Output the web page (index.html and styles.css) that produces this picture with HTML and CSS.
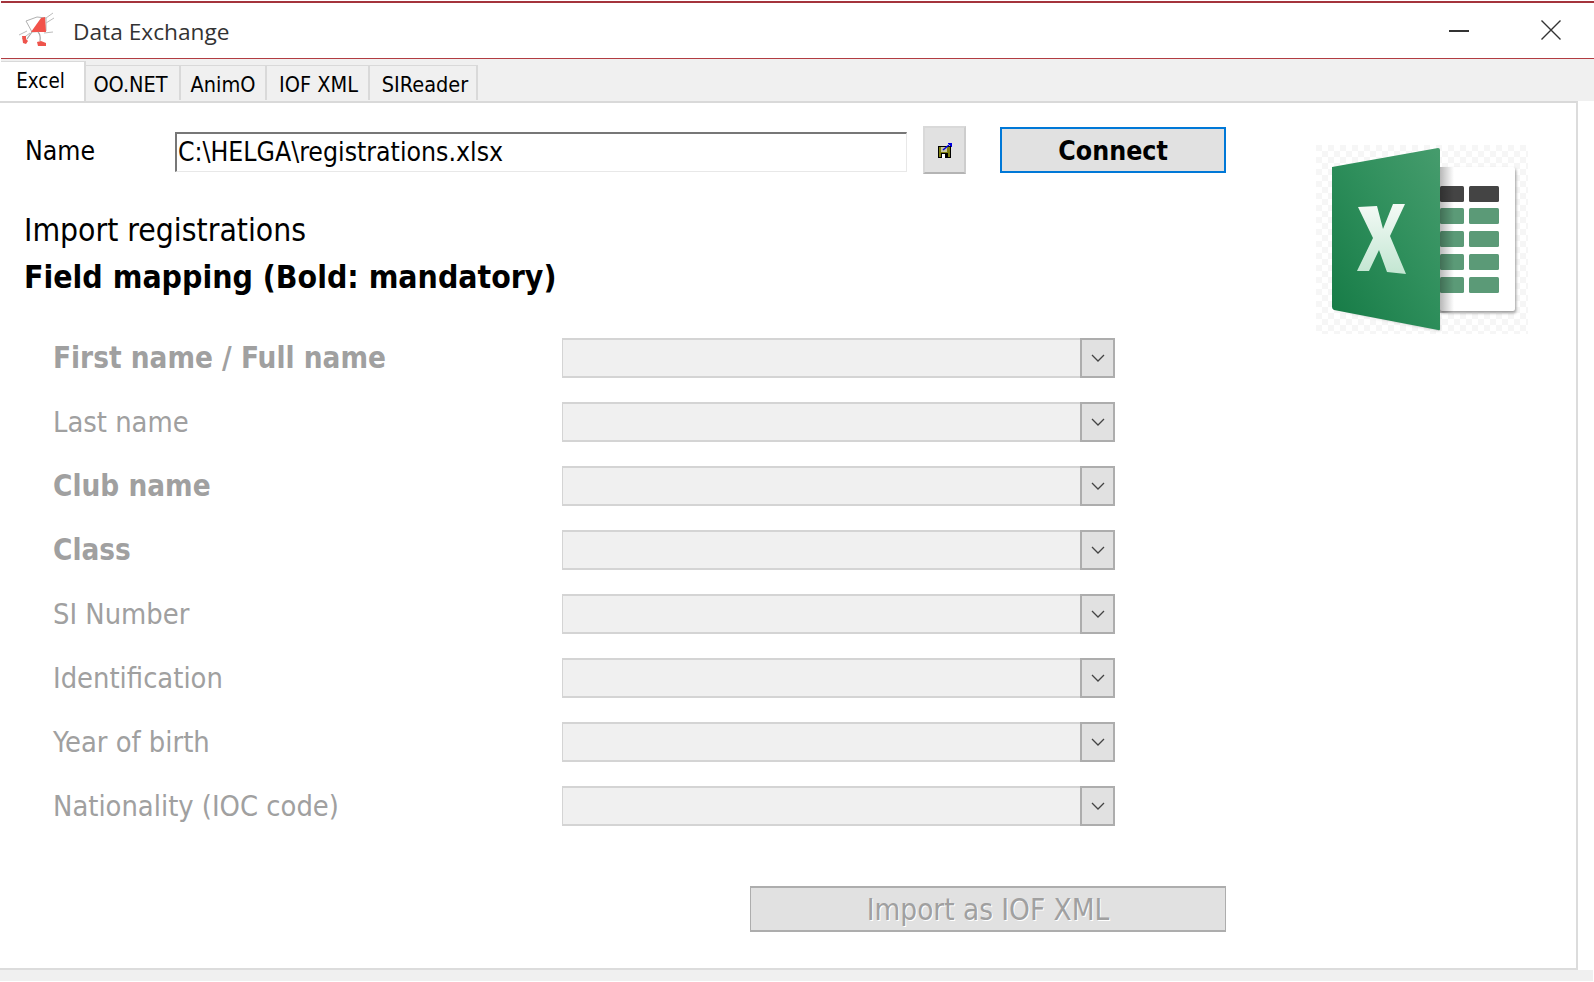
FILE: index.html
```html
<!DOCTYPE html>
<html lang="en">
<head>
<meta charset="utf-8">
<title>Data Exchange</title>
<link rel="stylesheet" href="styles.css">
</head>
<body>
<div class="window">
  <header class="titlebar">
    <svg class="app-logo" viewBox="0 0 50 50" width="50" height="50" aria-hidden="true">
      <path d="M16 13 L27 9 L36 10 L36 23 L22 24 Z" fill="#fff" stroke="#b0b0b0" stroke-width="1"/>
      <path d="M21 24 L31 10 L35 9 L36 24 Z" fill="#f2524a"/>
      <path d="M36 10 L43 5 M36 15 L44 10 M34 25 L43 24 M17 23 L9 27 M20 25 L12 31" stroke="#bcbcbc" stroke-width="1" fill="none"/>
      <path d="M28 24 Q31 27 30 33 M22 24 Q19 28 17 31" stroke="#a8a8a8" stroke-width="1.2" fill="none"/>
      <path d="M12 28 L16 28 L16 31 L18 33 L16 36 L13 35 Z" fill="#ee544c"/>
      <path d="M27 34 L31 33 L36 35 L36 38 L28 38 Z" fill="#ee544c"/>
    </svg>
    <span class="title-text">Data Exchange</span>
    <span class="win-btn win-min"><svg viewBox="0 0 20 2" width="20" height="2"><rect width="20" height="2" fill="#333"/></svg></span>
    <span class="win-btn win-close"><svg viewBox="0 0 20 20" width="20" height="20"><path d="M0.5 0.5 L19.5 19.5 M19.5 0.5 L0.5 19.5" stroke="#333" stroke-width="1.4" fill="none"/></svg></span>
  </header>

  <nav class="tabstrip">
    <span class="tab tab-active">Excel</span>
    <span class="tab tab-oo">OO.NET</span>
    <span class="tab tab-animo">AnimO</span>
    <span class="tab tab-iof">IOF XML</span>
    <span class="tab tab-si">SIReader</span>
  </nav>

  <main class="panel">
    <section class="form-col">
      <div class="file-row">
        <label class="file-label">Name</label>
        <div class="file-input">C:\HELGA\registrations.xlsx</div>
        <button class="browse-btn" type="button">
          <svg viewBox="0 0 14 15" width="14" height="15" shape-rendering="crispEdges" aria-hidden="true">
            <rect x="0" y="3" width="13" height="12" fill="#000"/>
            <rect x="1" y="4" width="11" height="10" fill="#7f7f10"/>
            <rect x="3" y="4" width="6" height="5" fill="#c8c8a0"/>
            <rect x="3" y="10" width="7" height="5" fill="#000"/>
            <rect x="4" y="11" width="3" height="4" fill="#fff"/>
            <path d="M5 7 L11 2" stroke="#0000e0" stroke-width="1.6" shape-rendering="auto"/>
            <path d="M9 0 L14 0 L14 5 Z" fill="#0000e0"/>
          </svg>
        </button>
        <button class="connect-btn" type="button">Connect</button>
      </div>

      <h1 class="h-import">Import registrations</h1>
      <h2 class="h-mapping">Field mapping (Bold: mandatory)</h2>

      <div class="rows">
        <div class="row"><span class="row-label strong">First name / Full name</span><div class="combo"><span class="combo-btn"><svg viewBox="0 0 14 8" width="14" height="8"><path d="M1 1 L7 7 L13 1" fill="none" stroke="#444" stroke-width="1.3"/></svg></span></div></div>
        <div class="row"><span class="row-label">Last name</span><div class="combo"><span class="combo-btn"><svg viewBox="0 0 14 8" width="14" height="8"><path d="M1 1 L7 7 L13 1" fill="none" stroke="#444" stroke-width="1.3"/></svg></span></div></div>
        <div class="row"><span class="row-label strong">Club name</span><div class="combo"><span class="combo-btn"><svg viewBox="0 0 14 8" width="14" height="8"><path d="M1 1 L7 7 L13 1" fill="none" stroke="#444" stroke-width="1.3"/></svg></span></div></div>
        <div class="row"><span class="row-label strong">Class</span><div class="combo"><span class="combo-btn"><svg viewBox="0 0 14 8" width="14" height="8"><path d="M1 1 L7 7 L13 1" fill="none" stroke="#444" stroke-width="1.3"/></svg></span></div></div>
        <div class="row"><span class="row-label">SI Number</span><div class="combo"><span class="combo-btn"><svg viewBox="0 0 14 8" width="14" height="8"><path d="M1 1 L7 7 L13 1" fill="none" stroke="#444" stroke-width="1.3"/></svg></span></div></div>
        <div class="row"><span class="row-label">Identification</span><div class="combo"><span class="combo-btn"><svg viewBox="0 0 14 8" width="14" height="8"><path d="M1 1 L7 7 L13 1" fill="none" stroke="#444" stroke-width="1.3"/></svg></span></div></div>
        <div class="row"><span class="row-label">Year of birth</span><div class="combo"><span class="combo-btn"><svg viewBox="0 0 14 8" width="14" height="8"><path d="M1 1 L7 7 L13 1" fill="none" stroke="#444" stroke-width="1.3"/></svg></span></div></div>
        <div class="row"><span class="row-label">Nationality (IOC code)</span><div class="combo"><span class="combo-btn"><svg viewBox="0 0 14 8" width="14" height="8"><path d="M1 1 L7 7 L13 1" fill="none" stroke="#444" stroke-width="1.3"/></svg></span></div></div>
      </div>

      <div class="import-wrap"><button class="import-btn" type="button" disabled>Import as IOF XML</button></div>
    </section>

    <aside class="icon-col">
      <svg viewBox="0 0 212 189" width="212" height="189" aria-label="Excel">
        <defs>
          <pattern id="chk" width="12" height="12" patternUnits="userSpaceOnUse">
            <rect width="12" height="12" fill="#fff"/>
            <rect width="6" height="6" fill="#f6f6f6"/>
            <rect x="6" y="6" width="6" height="6" fill="#f6f6f6"/>
          </pattern>
          <linearGradient id="cover" x1="0" y1="1" x2="1" y2="0">
            <stop offset="0" stop-color="#157a45"/>
            <stop offset="0.55" stop-color="#2f8f5c"/>
            <stop offset="1" stop-color="#469c6d"/>
          </linearGradient>
          <linearGradient id="xg" x1="0" y1="0" x2="0" y2="1">
            <stop offset="0" stop-color="#f4faf6"/>
            <stop offset="1" stop-color="#c3e6d2"/>
          </linearGradient>
          <linearGradient id="shade" x1="0" y1="0" x2="1" y2="0">
            <stop offset="0" stop-color="#000" stop-opacity="0.28"/>
            <stop offset="1" stop-color="#000" stop-opacity="0"/>
          </linearGradient>
          <filter id="soft" x="-10%" y="-10%" width="120%" height="120%"><feGaussianBlur stdDeviation="1.5"/></filter>
        </defs>
        <rect width="212" height="189" fill="url(#chk)"/>
        <rect x="124" y="24" width="76" height="144" rx="2" fill="#999" filter="url(#soft)"/>
        <rect x="124" y="22" width="75" height="144" rx="2" fill="#fff"/>
        <rect x="124" y="41" width="24" height="16" rx="1.5" fill="#444"/>
        <rect x="153" y="41" width="30" height="16" rx="1.5" fill="#444"/>
        <rect x="124" y="63" width="24" height="16" rx="1.5" fill="#5b9a77"/>
        <rect x="153" y="63" width="30" height="16" rx="1.5" fill="#5b9a77"/>
        <rect x="124" y="86" width="24" height="16" rx="1.5" fill="#5b9a77"/>
        <rect x="153" y="86" width="30" height="16" rx="1.5" fill="#5b9a77"/>
        <rect x="124" y="109" width="24" height="16" rx="1.5" fill="#5b9a77"/>
        <rect x="153" y="109" width="30" height="16" rx="1.5" fill="#5b9a77"/>
        <rect x="124" y="132" width="24" height="16" rx="1.5" fill="#5b9a77"/>
        <rect x="153" y="132" width="30" height="16" rx="1.5" fill="#5b9a77"/>
        <rect x="124" y="22" width="14" height="146" fill="url(#shade)"/>
        <path d="M20 165 L124 186 L124 172 Z" fill="#999" opacity="0.5" filter="url(#soft)"/>
        <path d="M16 22 L122 3 Q124 3 124 5 L124 184 Q124 186 122 185 L18 165 Q16 164 16 162 Z" fill="url(#cover)"/>
        <path d="M42 62 L61 61 L67 84 L77 59 L89 59 L74 91 L90 129 L71 127 L63 105 L53 126 L41 126 L57 93 Z" fill="url(#xg)"/>
      </svg>
    </aside>
  </main>
  <div class="bottom-strip"></div>
</div>
</body>
</html>
```
FILE: styles.css
```css
* { box-sizing: border-box; }
html, body { margin: 0; padding: 0; background: #fff; }
body { width: 1594px; height: 982px; overflow: hidden; font-family: "DejaVu Sans", "Liberation Sans", sans-serif; font-stretch: condensed; }
.window { display: flex; flex-direction: column; height: 982px; padding-left: 1px; }

.titlebar { height: 58px; display: flex; align-items: flex-start; border-top: 2px solid #a4343c; border-bottom: 1px solid #b23c42; background: #fff; margin-top: 1px; padding-left: 9px; }
.app-logo { flex: none; margin-top: 5px; }
.title-text { margin-left: 13px; margin-top: 14px; font-family: "Open Sans", "Noto Sans", sans-serif; font-stretch: normal; font-size: 22.7px; line-height: 30px; color: #333; flex: 1; }
.win-btn { display: flex; }
.win-min { margin-right: 72px; margin-top: 27px; }
.win-close { margin-right: 33px; margin-top: 17px; }

.tabstrip { height: 42px; display: flex; align-items: flex-end; background: #f0f0f0; font-size: 21.5px; color: #000; padding-bottom: 1px; }
.tab { height: 35px; padding-top: 2px; display: flex; align-items: center; justify-content: center; background: #f0f0f0; border: 1px solid #d9d9d9; border-bottom: 0; border-left: 0; border-right-width: 2px; }
.tab-active { height: 40px; width: 85px; padding-top: 0; padding-bottom: 2px; padding-right: 4px; font-size: 20.4px; background: #fff; position: relative; top: 1px; }
.tab-oo { width: 95px; padding-right: 4px; }
.tab-animo { width: 86px; }
.tab-iof { width: 103px; padding-left: 2px; }
.tab-si { width: 108px; padding-left: 4px; }

.panel { flex: none; height: 869px; width: 1578px; margin-left: -1px; background: #fff; border-top: 2px solid #d9d9d9; border-right: 2px solid #dcdcdc; border-bottom: 2px solid #dcdcdc; display: flex; }
.form-col { width: 1226px; flex: none; padding-top: 23px; }
.file-row { display: flex; align-items: flex-start; height: 50px; }
.file-label { width: 175px; padding-left: 25px; padding-top: 9px; font-size: 26.4px; color: #000; }
.file-input { width: 733px; height: 40px; margin-top: 6px; border: 1px solid #e8e8e8; border-top: 2px solid #777; border-left: 2px solid #777; font-size: 26.4px; line-height: 36px; color: #000; padding-left: 1px; background: #fff; white-space: nowrap; }
.browse-btn { width: 43px; height: 48px; margin-left: 16px; padding: 0; background: #e1e1e1; border: 2px solid #c4c4c4; border-color: #d9d9d9 #cdcdcd #b4b4b4 #d9d9d9; display: flex; align-items: center; justify-content: center; }
.connect-btn { width: 226px; height: 46px; margin-left: 34px; margin-top: 1px; padding: 0; background: #e1e1e1; border: 2px solid #0078d7; font: bold 26.5px "DejaVu Sans", sans-serif; font-stretch: condensed; color: #000; }
.h-import { margin: 34px 0 0 24px; font-size: 31.6px; font-weight: 400; line-height: 40px; color: #000; }
.h-mapping { margin: 7px 0 0 24px; font-size: 31.7px; font-weight: 700; line-height: 40px; color: #000; }
.rows { display: flex; flex-direction: column; gap: 24px; margin-top: 41px; }
.row { display: flex; align-items: center; height: 40px; padding-left: 53px; }
.row-label { width: 509px; font-size: 28.8px; color: #a0a0a0; white-space: nowrap; }
.row-label.strong { font-size: 29.4px; font-weight: 700; }
.combo { width: 553px; height: 40px; background: #f0f0f0; border: 2px solid #d4d4d4; border-left-width: 1px; display: flex; justify-content: flex-end; }
.combo-btn { width: 35px; height: 40px; margin: -2px -2px -2px 0; background: #e1e1e1; border: 2px solid #adadad; display: flex; align-items: center; justify-content: center; }
.import-wrap { display: flex; justify-content: flex-end; margin-top: 60px; }
.import-btn { width: 476px; height: 46px; padding: 2px 0 0; background: #e1e1e1; border: 1px solid #adadad; border-width: 2px 1px; font: 29.4px "DejaVu Sans", sans-serif; font-stretch: condensed; color: #a0a0a0; text-shadow: 1px 1px 0 #fff; }
.icon-col { flex: 1; padding-top: 42px; padding-left: 90px; }
.icon-col svg { display: block; }
.bottom-strip { height: 11px; width: 1593px; margin-left: -1px; background: #f0f0f0; }
```
